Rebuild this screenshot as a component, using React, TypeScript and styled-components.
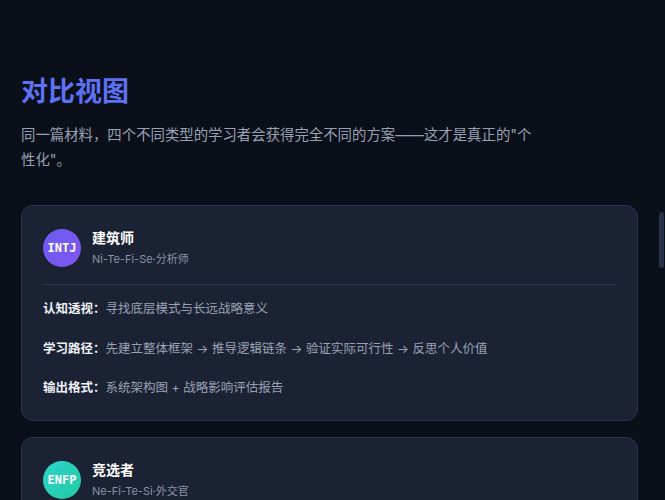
import styled, { createGlobalStyle } from "styled-components";

interface Learner {
    code : string;
    name : string;
    functions : string;
    group : string;
    tone : "violet" | "teal";
    rows : { label : string; text : string }[];
}

const learners : Learner[] = [
    {
        code : "INTJ",
        name : "建筑师",
        functions : "Ni-Te-Fi-Se",
        group : "分析师",
        tone : "violet",
        rows : [
            { label : "认知透视：", text : "寻找底层模式与长远战略意义" },
            { label : "学习路径：", text : "先建立整体框架 → 推导逻辑链条 → 验证实际可行性 → 反思个人价值" },
            { label : "输出格式：", text : "系统架构图 + 战略影响评估报告" },
        ],
    },
    {
        code : "ENFP",
        name : "竞选者",
        functions : "Ne-Fi-Te-Si",
        group : "外交官",
        tone : "teal",
        rows : [
            { label : "认知透视：", text : "发现多种可能性与人文价值" },
            { label : "学习路径：", text : "头脑风暴 → 联系个人经历 → 整理结构 → 回顾细节" },
            { label : "输出格式：", text : "思维导图 + 故事化案例" },
        ],
    },
];

const App = () => {
    return (
        <>
            <GlobalStyle />
            <Page>
                <Title>对比视图</Title>
                <Intro>同一篇材料，四个不同类型的学习者会获得完全不同的方案——这才是真正的"个性化"。</Intro>
                <CardList>
                    {learners.map((learner) => (
                        <Card key={learner.code}>
                            <CardHead>
                                <Avatar $tone={learner.tone}>{learner.code}</Avatar>
                                <HeadText>
                                    <Name>{learner.name}</Name>
                                    <Meta>{learner.functions}·{learner.group}</Meta>
                                </HeadText>
                            </CardHead>
                            <Rows>
                                {learner.rows.map((row) => (
                                    <Row key={row.label}>
                                        <RowLabel>{row.label}</RowLabel>
                                        {row.text}
                                    </Row>
                                ))}
                            </Rows>
                        </Card>
                    ))}
                </CardList>
            </Page>
            <ScrollThumb />
        </>
    );
};

export default App;

const GlobalStyle = createGlobalStyle`
    html, body {
        margin : 0;
        height : 100%;
        overflow : hidden;
        background : #0b0f19;
    }
    body {
        font-family : Inter, "Noto Sans CJK SC", sans-serif;
        color : #e6e9f0;
    }
`;

const Page = styled.main`
    padding : 72px 27px 0 21px;
    box-sizing : border-box;
`;

const Title = styled.h1`
    margin : 0;
    font-size : 27px;
    line-height : 40px;
    font-weight : 700;
    color : #5d72f2;
`;

const Intro = styled.p`
    margin : 10px 0 0;
    max-width : 512px;
    font-size : 14.4px;
    line-height : 25px;
    color : #98a1b3;
`;

const CardList = styled.div`
    margin-top : 33px;
    display : flex;
    flex-direction : column;
    gap : 16px;
`;

const Card = styled.section`
    background : #1b2234;
    border : 1px solid #2a3450;
    border-radius : 12px;
    padding : 23px 21px 23px;
`;

const CardHead = styled.div`
    display : flex;
    align-items : center;
    gap : 11px;
    padding-bottom : 17px;
    border-bottom : 1px solid #2c3650;
`;

const Avatar = styled.div<{ $tone : "violet" | "teal" }>`
    width : 38px;
    height : 38px;
    border-radius : 50%;
    flex-shrink : 0;
    display : flex;
    align-items : center;
    justify-content : center;
    background : ${({ $tone }) => $tone === "violet"
        ? "linear-gradient(135deg, #6a5cf2, #8155f0)"
        : "linear-gradient(135deg, #2fd4cc, #22c9a0)"};
    color : #ffffff;
    font-family : "DejaVu Sans Mono", monospace;
    font-weight : 700;
    font-size : 12px;
`;

const HeadText = styled.div`
    display : flex;
    flex-direction : column;
    gap : 5px;
`;

const Name = styled.div`
    font-size : 14px;
    line-height : 18px;
    font-weight : 700;
    color : #ffffff;
`;

const Meta = styled.div`
    font-size : 11px;
    line-height : 15px;
    color : #8a93a6;
`;

const Rows = styled.div`
    display : flex;
    flex-direction : column;
    gap : 20.5px;
    padding-top : 14px;
`;

const Row = styled.div`
    font-size : 12.5px;
    line-height : 19px;
    color : #9aa3b5;
`;

const RowLabel = styled.span`
    font-weight : 700;
    color : #eef1f6;
`;

const ScrollThumb = styled.div`
    position : fixed;
    right : 1px;
    top : 212px;
    width : 5px;
    height : 56px;
    border-radius : 3px;
    background : #26314a;
`;
